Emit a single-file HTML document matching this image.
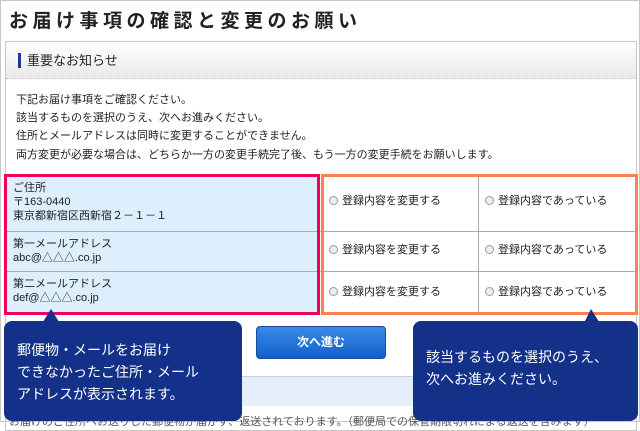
<!DOCTYPE html>
<html><head><meta charset="utf-8"><style>
*{margin:0;padding:0;box-sizing:border-box}
body{width:640px;height:422px;overflow:hidden;background:#fff;font-family:"Liberation Sans","Noto Sans CJK JP",sans-serif;color:#222;position:relative;border:1px solid #c8c8c8}
.a{position:absolute}
h1{position:absolute;left:8px;top:5px;font-size:19px;letter-spacing:4.5px;font-weight:bold;color:#222}
.panel{left:4px;top:40px;width:632px;height:390px;border:1px solid #c8c8c8}
.hd{left:5px;top:41px;width:630px;height:37px;background:linear-gradient(#fff,#e9e9e9);border-bottom:1px dotted #bbb}
.hd span{position:absolute;left:12px;top:11px;font-size:13px;border-left:3px solid #1a3a8a;padding-left:6px;line-height:15px}
.tx{left:15px;font-size:11px}
.cell{position:absolute;font-size:11px;line-height:14px}
.rad{display:inline-block;width:9px;height:9px;border:1px solid #999;border-radius:50%;background:#eee;vertical-align:-1px;margin-right:4px}
.call{background:#14318a;color:#fff;border-radius:8px;font-size:14px;line-height:22px}
</style></head><body>
<h1>お届け事項の確認と変更のお願い</h1>
<div class="a panel"></div>
<div class="a hd"><span>重要なお知らせ</span></div>
<div class="a tx" style="top:90px">下記お届け事項をご確認ください。</div>
<div class="a tx" style="top:108px">該当するものを選択のうえ、次へお進みください。</div>
<div class="a tx" style="top:126px">住所とメールアドレスは同時に変更することができません。</div>
<div class="a tx" style="top:145px">両方変更が必要な場合は、どちらか一方の変更手続完了後、もう一方の変更手続をお願いします。</div>
<div class="a" style="left:5px;top:173px;width:312px;height:140px;background:#ddeefc"></div>
<div class="a" style="left:5px;top:230px;width:630px;height:1px;background:#aaa"></div>
<div class="a" style="left:5px;top:270px;width:630px;height:1px;background:#aaa"></div>
<div class="a" style="left:477px;top:173px;width:1px;height:140px;background:#aaa"></div>
<div class="a" style="left:3px;top:173px;width:316px;height:141px;border:3px solid #f0005a"></div>
<div class="a" style="left:320px;top:173px;width:317px;height:141px;border:3px solid #ff8050"></div>
<div class="cell" style="left:12px;top:180px">ご住所<br>〒163-0440<br>東京都新宿区西新宿２－１－１</div>
<div class="cell" style="left:12px;top:236px">第一メールアドレス<br>abc@△△△.co.jp</div>
<div class="cell" style="left:12px;top:276px">第二メールアドレス<br>def@△△△.co.jp</div>
<div class="cell" style="left:328px;top:193px"><i class="rad"></i>登録内容を変更する</div>
<div class="cell" style="left:484px;top:193px"><i class="rad"></i>登録内容であっている</div>
<div class="cell" style="left:328px;top:242px"><i class="rad"></i>登録内容を変更する</div>
<div class="cell" style="left:484px;top:242px"><i class="rad"></i>登録内容であっている</div>
<div class="cell" style="left:328px;top:284px"><i class="rad"></i>登録内容を変更する</div>
<div class="cell" style="left:484px;top:284px"><i class="rad"></i>登録内容であっている</div>
<div class="a" style="left:240px;top:375px;width:172px;height:30px;background:#e6eefc;border-top:1px solid #ccd"></div>
<div class="a" style="left:255px;top:325px;width:130px;height:33px;background:linear-gradient(#3a8ae8,#1060cc);border:1px solid #1a4a9a;border-radius:4px;color:#fff;font-size:12px;font-weight:bold;text-align:center;line-height:31px">次へ進む</div>
<div class="a" style="left:8px;top:412px;font-size:11px;color:#555;white-space:nowrap">お届けのご住所へお送りした郵便物が届かず、返送されております。（郵便局での保管期限切れによる返送を含みます）</div>
<svg class="a" style="left:0;top:300px" width="640" height="30"><polygon points="40,24 50,8 60,24" fill="#14318a"/><polygon points="582,24 590,8 600,24" fill="#14318a"/></svg>
<div class="a call" style="left:3px;top:320px;width:238px;height:100px;padding:18px 0 0 13px">郵便物・メールをお届け<br>できなかったご住所・メール<br>アドレスが表示されます。</div>
<div class="a call" style="left:412px;top:320px;width:225px;height:100px;padding:25px 0 0 13px">該当するものを選択のうえ、<br>次へお進みください。</div>
</body></html>
